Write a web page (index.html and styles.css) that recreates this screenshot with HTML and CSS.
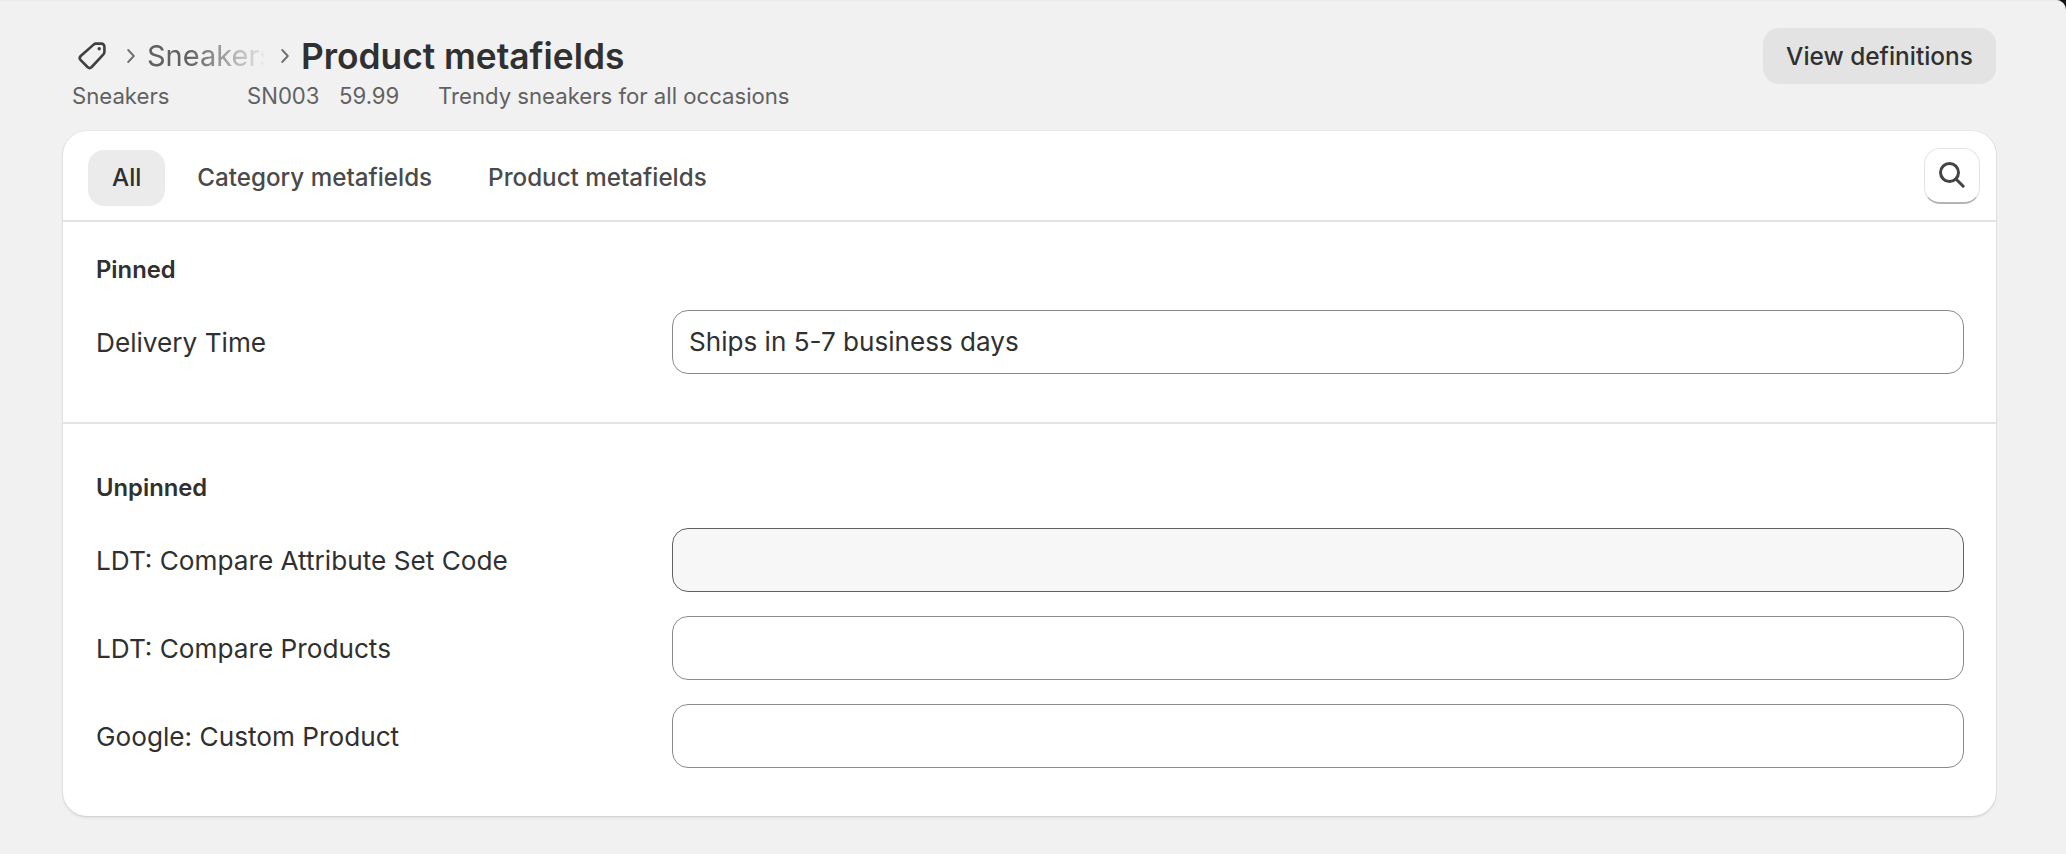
FILE: index.html
```html
<!DOCTYPE html>
<html lang="en">
<head>
<meta charset="utf-8">
<title>Product metafields</title>
<link rel="stylesheet" href="styles.css">
</head>
<body>
<main class="page">
  <header class="header">
    <div class="heading">
      <div class="crumbs">
        <svg class="tag" viewBox="0 0 32 32" width="32" height="32" fill="none" stroke="#404040" stroke-width="2.6" stroke-linejoin="round"><path d="M20 3.6h5.4a3 3 0 0 1 3 3V12a3.4 3.4 0 0 1-1 2.4L15.7 27a3 3 0 0 1-4.2 0l-6.8-6.8a3 3 0 0 1 0-4.2L17.6 4.6a3.4 3.4 0 0 1 2.4-1z"/><circle cx="23.2" cy="8.8" r="1.7" fill="#404040" stroke="none"/></svg>
        <svg class="chev" viewBox="0 0 10 18" width="10" height="18" fill="none" stroke="#707070" stroke-width="1.9" stroke-linecap="round" stroke-linejoin="round"><path d="M2.2 3 7.8 9l-5.6 6"/></svg>
        <span class="crumb">Sneakers</span>
        <svg class="chev" viewBox="0 0 10 18" width="10" height="18" fill="none" stroke="#707070" stroke-width="1.9" stroke-linecap="round" stroke-linejoin="round"><path d="M2.2 3 7.8 9l-5.6 6"/></svg>
        <h1 class="title">Product metafields</h1>
      </div>
      <div class="meta">
        <span class="meta-name">Sneakers</span>
        <span class="meta-sku">SN003</span>
        <span class="meta-price">59.99</span>
        <span>Trendy sneakers for all occasions</span>
      </div>
    </div>
    <button class="primary">View definitions</button>
  </header>
  <section class="card">
    <nav class="tabs">
      <div class="tablist">
        <span class="tab active">All</span>
        <span class="tab">Category metafields</span>
        <span class="tab">Product metafields</span>
      </div>
      <button class="search" aria-label="Search">
        <svg viewBox="0 0 28 28" width="28" height="28" fill="none" stroke="#444" stroke-width="3" stroke-linecap="round"><circle cx="11.5" cy="11.5" r="9"/><path d="m18.2 18.2 7 7"/></svg>
      </button>
    </nav>
    <div class="group pinned">
      <h2 class="group-title">Pinned</h2>
      <div class="row"><label class="label">Delivery Time</label><div class="field">Ships in 5-7 business days</div></div>
    </div>
    <div class="group unpinned">
      <h2 class="group-title">Unpinned</h2>
      <div class="row"><label class="label">LDT: Compare Attribute Set Code</label><div class="field hover"></div></div>
      <div class="row"><label class="label">LDT: Compare Products</label><div class="field"></div></div>
      <div class="row"><label class="label">Google: Custom Product</label><div class="field"></div></div>
    </div>
  </section>
</main>
</body>
</html>
```
FILE: styles.css
```css
* { box-sizing: border-box; }
html, body { margin: 0; height: 100%; }
body {
  background: #141414;
  font-family: Inter, "Liberation Sans", sans-serif;
  color: #303030;
  overflow: hidden;
}
.page {
  height: 100%;
  padding: 28px 70px 0 63px;
  background: #f1f1f1;
  border-top-right-radius: 10px;
  box-shadow: inset 0 1px 1px #e9e9e9;
}
.header { display: flex; justify-content: space-between; align-items: flex-start; height: 103px; }
.heading { display: flex; flex-direction: column; padding-left: 9px; }
.crumbs { display: flex; align-items: center; height: 56px; }
.tag { margin: 0 3px 0 4px; }
.chev { margin: 0 11px 0 15px; }
.crumb {
  width: 118px;
  font-size: 29px;
  line-height: 56px;
  color: #616161;
  overflow: hidden;
  white-space: nowrap;
  -webkit-mask-image: linear-gradient(90deg, #000 35%, rgba(0,0,0,.12) 96%, transparent 100%);
  mask-image: linear-gradient(90deg, #000 35%, rgba(0,0,0,.12) 96%, transparent 100%);
}
.title { margin: 2px 0 0; font-size: 35.3px; font-weight: 600; line-height: 56px; color: #303030; white-space: nowrap; }
.meta { display: flex; font-size: 22.15px; line-height: 25px; color: #616161; }
.meta-name { width: 175px; }
.meta-sku { width: 92px; }
.meta-price { width: 99px; }
.primary {
  width: 233px;
  height: 56px;
  border: 0;
  border-radius: 16px;
  background: #e3e3e3;
  font: 550 24.4px Inter, sans-serif;
  color: #303030;
}
.card {
  background: #fff;
  border-radius: 24px;
  height: 685px;
  box-shadow: 0 1px 0 #d4d4d4, 1px 0 0 #e0e0e0, -1px 0 0 #e0e0e0, 0 -1px 0 #e8e8e8, 0 2px 3px rgba(0,0,0,.08);
}
.tabs { display: flex; justify-content: space-between; align-items: center; height: 91px; padding: 0 16px 0 25px; border-bottom: 2px solid #e3e3e3; }
.tablist { display: flex; margin-top: 5px; }
.tab { height: 56px; line-height: 56px; padding: 0 24px; border-radius: 16px; font-size: 24.2px; font-weight: 550; color: #4a4a4a; margin-right: 8px; }
.tab.active { background: #ebebeb; color: #303030; }
.search {
  width: 56px;
  height: 56px;
  background: #fff;
  border: 1px solid #e3e3e3;
  border-bottom: 2px solid #b5b5b5;
  border-radius: 16px;
  display: flex;
  align-items: center;
  justify-content: center;
  padding: 0;
}
.group { padding: 0 32px 0 33px; }
.pinned { height: 202px; padding-top: 34px; border-bottom: 2px solid #e3e3e3; }
.unpinned { padding-top: 50px; }
.group-title { margin: 0 0 26px; font-size: 23.8px; line-height: 28px; font-weight: 600; color: #303030; }
.row { display: flex; align-items: center; margin-bottom: 24px; }
.label { width: 576px; font-size: 26.2px; color: #303030; white-space: nowrap; }
.field {
  flex: 1;
  height: 64px;
  border: 1px solid #8a8a8a;
  border-radius: 16px;
  background: #fff;
  padding: 0 16px;
  font-size: 26.1px;
  line-height: 62px;
  color: #303030;
}
.field.hover { background: #f7f7f7; border-color: #616161; }
```
